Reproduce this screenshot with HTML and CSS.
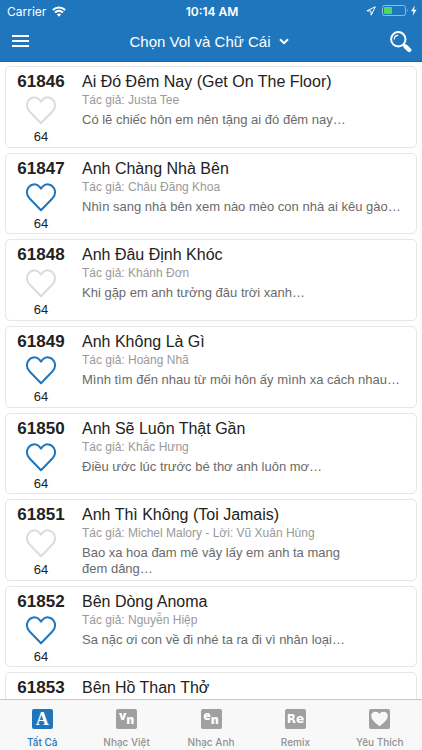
FILE: index.html
```html
<!DOCTYPE html>
<html lang="vi">
<head>
<meta charset="utf-8">
<meta name="viewport" content="width=device-width, initial-scale=1">
<title>Chọn Vol và Chữ Cái</title>
<link rel="stylesheet" href="styles.css">
</head>
<body>
<svg class="sprite" aria-hidden="true">
  <symbol id="heart" viewBox="0 0 32 30"><path d="M16 28.2 L4.4 16.2 C1.8 13.2 1.4 9.2 3 6.2 C5.4 1.8 11.2 1 14.4 4.6 L16 6.6 L17.6 4.6 C20.8 1 26.6 1.8 29 6.2 C30.6 9.2 30.2 13.2 27.6 16.2 Z" fill="none" stroke="currentColor" stroke-width="2" stroke-linejoin="round"/></symbol>
</svg>
<header class="top">
  <div class="status">
    <div class="carrier">
      <span>Carrier</span>
      <svg width="14" height="11" viewBox="0 0 14 11" fill="none" stroke="#fff" stroke-width="2"><path d="M.8 4 C4.4 .6 9.6 .6 13.2 4"/><path d="M3 6.6 C5.4 4.4 8.6 4.4 11 6.6"/><path d="M7 10.8 L4.8 8.5 C6.2 7.3 7.8 7.3 9.2 8.5 Z" fill="#fff" stroke="none"/></svg>
    </div>
    <time class="clock">10:14 AM</time>
    <div class="power">
      <svg width="10" height="10" viewBox="0 0 10 10" fill="none" stroke="#fff" stroke-width="1"><path d="M9.3 .8 L.9 4.8 L5 5.1 L5.2 9.2 Z"/></svg>
      <svg width="35" height="12" viewBox="0 0 35 12"><rect x=".5" y=".5" width="23" height="10" rx="2" fill="none" stroke="#8fbde0"/><rect x="2" y="2" width="8" height="7" rx="1" fill="#4cd964"/><path d="M25 3.8 Q26.6 5.5 25 7.2 Z" fill="#8fbde0"/><path d="M32.8 .6 L29 6.3 H31.5 L30.6 10.8 L34.6 4.8 H32 Z" fill="#fff"/></svg>
    </div>
  </div>
  <div class="bar">
    <button class="icon-button" type="button" aria-label="Menu"><svg width="17" height="13" viewBox="0 0 17 13" fill="#fff"><path d="M0 0H17V2H0Z M0 5H17V7H0Z M0 10H17V12H0Z"/></svg></button>
    <button class="picker" type="button">Chọn Vol và Chữ Cái<svg width="10" height="7" viewBox="0 0 10 7" fill="none" stroke="#fff" stroke-width="2"><path d="M1 1.2 L5 5.2 L9 1.2"/></svg></button>
    <button class="icon-button" type="button" aria-label="Tìm kiếm"><svg width="22" height="22" viewBox="0 0 22 22" fill="none" stroke="#fff"><circle cx="8.3" cy="8.3" r="7.2" stroke-width="2"/><path d="M4.2 8.4 A4.2 4.2 0 0 1 8.2 4.3" stroke-width="1.2"/><path d="M13.4 13.4 L15.6 15.6" stroke-width="2.4"/><path d="M15.6 15.6 L19.2 19" stroke-width="4.4" stroke-linecap="round"/></svg></button>
  </div>
</header>
<main class="content">
  <ul class="songs">
    <li class="song">
      <div class="side"><strong class="code">61846</strong><button class="like" type="button" aria-label="Yêu thích" aria-pressed="false"><svg width="32" height="30"><use href="#heart"/></svg></button><span class="vol">64</span></div>
      <div class="info"><h2 class="title">Ai Đó Đêm Nay (Get On The Floor)</h2><p class="author">Tác giả: Justa Tee</p><p class="lyric">Có lẽ chiếc hôn em nên tặng ai đó đêm nay…</p></div>
    </li>
    <li class="song">
      <div class="side"><strong class="code">61847</strong><button class="like" type="button" aria-label="Yêu thích" aria-pressed="true"><svg width="32" height="30"><use href="#heart"/></svg></button><span class="vol">64</span></div>
      <div class="info"><h2 class="title">Anh Chàng Nhà Bên</h2><p class="author">Tác giả: Châu Đăng Khoa</p><p class="lyric">Nhìn sang nhà bên xem nào mèo con nhà ai kêu gào…</p></div>
    </li>
    <li class="song">
      <div class="side"><strong class="code">61848</strong><button class="like" type="button" aria-label="Yêu thích" aria-pressed="false"><svg width="32" height="30"><use href="#heart"/></svg></button><span class="vol">64</span></div>
      <div class="info"><h2 class="title">Anh Đâu Định Khóc</h2><p class="author">Tác giả: Khánh Đơn</p><p class="lyric">Khi gặp em anh tưởng đâu trời xanh…</p></div>
    </li>
    <li class="song">
      <div class="side"><strong class="code">61849</strong><button class="like" type="button" aria-label="Yêu thích" aria-pressed="true"><svg width="32" height="30"><use href="#heart"/></svg></button><span class="vol">64</span></div>
      <div class="info"><h2 class="title">Anh Không Là Gì</h2><p class="author">Tác giả: Hoàng Nhã</p><p class="lyric">Mình tìm đến nhau từ môi hôn ấy mình xa cách nhau…</p></div>
    </li>
    <li class="song">
      <div class="side"><strong class="code">61850</strong><button class="like" type="button" aria-label="Yêu thích" aria-pressed="true"><svg width="32" height="30"><use href="#heart"/></svg></button><span class="vol">64</span></div>
      <div class="info"><h2 class="title">Anh Sẽ Luôn Thật Gần</h2><p class="author">Tác giả: Khắc Hưng</p><p class="lyric">Điều ước lúc trước bé thơ anh luôn mơ…</p></div>
    </li>
    <li class="song">
      <div class="side"><strong class="code">61851</strong><button class="like" type="button" aria-label="Yêu thích" aria-pressed="false"><svg width="32" height="30"><use href="#heart"/></svg></button><span class="vol">64</span></div>
      <div class="info"><h2 class="title">Anh Thì Không (Toi Jamais)</h2><p class="author">Tác giả: Michel Malory - Lời: Vũ Xuân Hùng</p><p class="lyric">Bao xa hoa đam mê vây lấy em anh ta mang<br>đem dâng…</p></div>
    </li>
    <li class="song">
      <div class="side"><strong class="code">61852</strong><button class="like" type="button" aria-label="Yêu thích" aria-pressed="true"><svg width="32" height="30"><use href="#heart"/></svg></button><span class="vol">64</span></div>
      <div class="info"><h2 class="title">Bên Dòng Anoma</h2><p class="author">Tác giả: Nguyễn Hiệp</p><p class="lyric">Sa nặc ơi con về đi nhé ta ra đi vì nhân loại…</p></div>
    </li>
    <li class="song">
      <div class="side"><strong class="code">61853</strong></div>
      <div class="info"><h2 class="title">Bên Hồ Than Thở</h2></div>
    </li>
  </ul>
</main>
<nav class="tabs">
  <a class="tab active" href="#all" aria-current="page"><span class="tile serif">A</span>Tất Cả</a>
  <a class="tab" href="#vn"><span class="tile"><span class="raised">v</span><span class="lowered">n</span></span>Nhạc Việt</a>
  <a class="tab" href="#en"><span class="tile"><span class="raised">e</span><span class="lowered">n</span></span>Nhạc Anh</a>
  <a class="tab" href="#remix"><span class="tile wide">Re</span>Remix</a>
  <a class="tab" href="#liked"><span class="tile"><svg width="17" height="16" viewBox="0 0 16 15"><path d="M8 14.6 C7 12.8 .2 9.4 .2 4.6 C.2 .2 6 -.6 8 2.8 C10 -.6 15.8 .2 15.8 4.6 C15.8 9.4 9 12.8 8 14.6 Z" fill="#f8f8f8"/></svg></span>Yêu Thích</a>
</nav>
</body>
</html>
```
FILE: styles.css
```css
* { box-sizing: border-box; }

body {
  display: flex;
  flex-direction: column;
  height: 100vh;
  margin: 0;
  background: #fff;
  color: #222;
  font-family: "Liberation Sans", Arial, sans-serif;
}

button {
  display: flex;
  align-items: center;
  justify-content: center;
  padding: 0;
  border: 0;
  background: none;
  color: inherit;
  font: inherit;
}

svg { display: block; }
.sprite { position: absolute; width: 0; height: 0; }

.top {
  flex: none;
  background: #1f76bd;
  color: #fff;
  border-bottom: 1px solid #1a64a8;
}

.status {
  display: grid;
  grid-template-columns: 1fr auto 1fr;
  align-items: center;
  height: 22px;
  padding: 0 5px 0 7px;
  font-family: Inter, sans-serif;
  font-size: 12px;
}
.carrier, .power { display: flex; align-items: center; gap: 6px; }
.power { justify-content: flex-end; }
.clock { font-weight: 600; }

.bar {
  display: flex;
  align-items: center;
  justify-content: space-between;
  height: 39px;
  padding: 0 10px 0 12px;
}
.picker { gap: 9px; font-size: 15px; }

.content {
  flex: 1;
  min-height: 0;
  overflow-y: auto;
  padding: 4px 5px;
  scrollbar-width: none;
}

/* Equal rows, so every card is as tall as the others */
.songs {
  display: grid;
  grid-auto-rows: 1fr;
  gap: 5px;
  min-height: 688px;
  margin: 0;
  padding: 0;
  list-style: none;
}
.song {
  display: flex;
  gap: 6px;
  border: 1px solid #e6e6e6;
  border-radius: 5px;
}
.side {
  display: flex;
  flex: none;
  flex-direction: column;
  align-items: center;
  width: 70px;
  padding-top: 5px;
}
.code { font-size: 17px; line-height: 20px; }
.like { height: 36px; color: #dcdcdc; }
.like[aria-pressed="true"] { color: #1f76bd; }
.vol { font-size: 13px; line-height: 18px; }

.info { flex: 1; min-width: 0; padding-top: 5px; }
.title { margin: 0; font-size: 16px; font-weight: 400; line-height: 20px; }
.author { margin: 0; color: #999; font-size: 12px; line-height: 16px; }
.lyric { margin: 4px 0 0; color: #6a6a6a; font-size: 13px; line-height: 16px; }

.tabs {
  display: flex;
  flex: none;
  height: 51px;
  border-top: 1px solid #c8c8c8;
  background: #f8f8f8;
}
.tab {
  display: flex;
  flex: 1;
  flex-direction: column;
  align-items: center;
  gap: 6px;
  padding-top: 9px;
  color: #929292;
  font-family: Inter, sans-serif;
  font-size: 10px;
  font-weight: 500;
  line-height: 14px;
  text-decoration: none;
}
.active { color: #1f76bd; }
.tile {
  display: flex;
  align-items: center;
  justify-content: center;
  width: 21px;
  height: 20px;
  border-radius: 2px;
  background: #a0a0a0;
  color: #fff;
  font-family: "Noto Sans", sans-serif;
  font-size: 12px;
  font-weight: 900;
}
.active .tile { background: #1f76bd; }
.serif { font-family: "Liberation Serif", serif; font-size: 18px; font-weight: 700; }
.raised { padding-bottom: 6px; }
.lowered { padding-top: 1px; }
.wide { font-family: "DejaVu Sans", sans-serif; }
```
